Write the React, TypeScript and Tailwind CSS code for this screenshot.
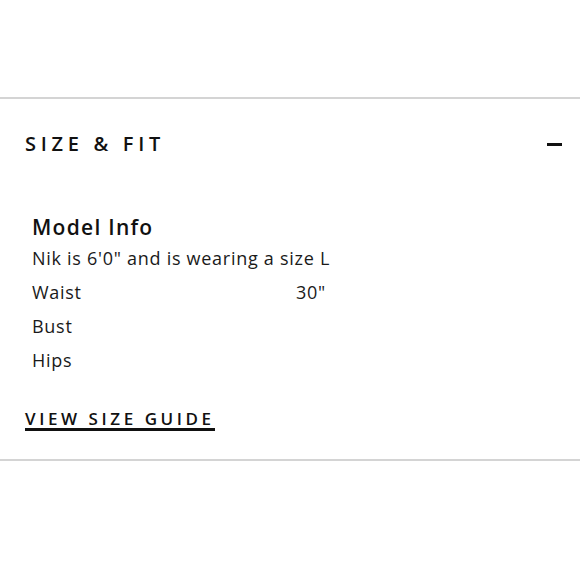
import React from "react";

export default function App() {
  const font = { fontFamily: '"Open Sans", "DejaVu Sans", sans-serif' };
  return (
    <div className="w-[580px] h-[580px] bg-white text-[#111]" style={font}>
      <div className="h-[97px]" />
      <div className="border-t-[2px] border-b-[2px] border-[#d4d4d4]">
        <div className="flex items-center justify-between pl-[25px] pr-[18px] pt-[33px] h-[24px] box-content">
          <h2 className="text-[20px] leading-[24px] font-semibold tracking-[0.235em] text-[#111]">SIZE &amp; FIT</h2>
          <div className="w-[15px] h-[3px] bg-[#111]" />
        </div>
        <div className="pl-[32px] mt-[56px]">
          <div className="text-[21px] leading-[30px] font-semibold tracking-[0.06em] text-[#111] -mb-[1px]">Model Info</div>
          <div className="text-[18px] leading-[34px] tracking-[0.04em] text-[#1a1a1a]">Nik is 6'0" and is wearing a size L</div>
          <div className="grid grid-cols-[264px_1fr] text-[18px] leading-[34px] tracking-[0.04em] text-[#1a1a1a]">
            <span>Waist</span>
            <span>30"</span>
          </div>
          <div className="text-[18px] leading-[34px] tracking-[0.04em] text-[#1a1a1a]">Bust</div>
          <div className="text-[18px] leading-[34px] tracking-[0.04em] text-[#1a1a1a]">Hips</div>
        </div>
        <div className="pl-[25px] mt-[30px] pb-[28px]">
          <span className="inline-block text-[17px] leading-[19px] font-semibold tracking-[0.21em] border-b-[3px] border-[#111] text-[#111] pr-[0px]">VIEW SIZE GUIDE</span>
        </div>
      </div>
    </div>
  );
}
